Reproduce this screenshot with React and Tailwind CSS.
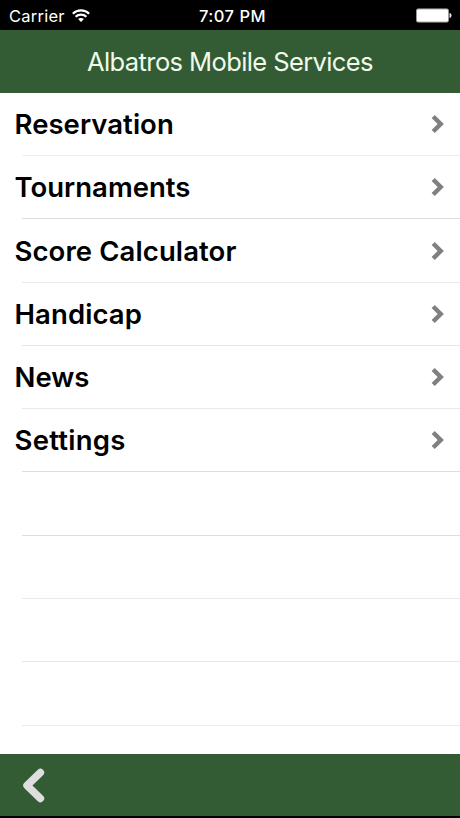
const rows = [
  { label: 'Reservation', h: 'h-[63px]', line: 'border-[#efeff0]', tracking: 'tracking-[0.05px]' },
  { label: 'Tournaments', h: 'h-[63px]', line: 'border-[#dedee0]', tracking: 'tracking-[0px]' },
  { label: 'Score Calculator', h: 'h-[64px]', line: 'border-[#e9e9ea]', tracking: 'tracking-[0.1px]' },
  { label: 'Handicap', h: 'h-[63px]', line: 'border-[#e6e6e7]', tracking: 'tracking-[0.1px]' },
  { label: 'News', h: 'h-[63px]', line: 'border-[#e9e9ea]', tracking: 'tracking-[0px]' },
  { label: 'Settings', h: 'h-[63px]', line: 'border-[#dedee0]', tracking: 'tracking-[0.25px]' },
  { h: 'h-[64px]', line: 'border-[#dedee0]' },
  { h: 'h-[63px]', line: 'border-[#e9e9ea]' },
  { h: 'h-[63px]', line: 'border-[#e6e6e7]' },
  { h: 'h-[64px]', line: 'border-[#ececed]' },
];

function Wifi() {
  return (
    <svg className="ml-[7px] h-[14px] w-[18px]" viewBox="0 0 18 14" fill="none" stroke="#fff" strokeWidth="2.1">
      <path d="M0.8 4.700C5.400 0.300 12.600 0.300 17.200 4.700" />
      <path d="M3.600 7.700C6.500 4.900 11.500 4.900 14.400 7.700" />
      <path d="M9 13L6.100 10.100C7.700 8.600 10.300 8.600 11.900 10.100Z" fill="#fff" stroke="none" />
    </svg>
  );
}

function Battery() {
  return (
    <svg className="h-[15px] w-[36px]" viewBox="0 0 36 15">
      <rect x="0.5" y="0.9" width="32" height="13.2" rx="1.6" fill="#fff" stroke="#999" />
      <path d="M33.500 5v5c1.400-.2 2-1.300 2-2.500s-.6-2.300-2-2.500z" fill="#e8e8e8" />
    </svg>
  );
}

export default function App() {
  return (
    <div className="flex h-[818px] w-[460px] flex-col overflow-hidden bg-white font-['Inter',sans-serif]">
      <header className="grid h-[30px] shrink-0 grid-cols-3 items-center bg-black text-white">
        <div className="flex items-center pl-[9px] pt-[2px]">
          <span className="text-[16.5px] leading-5 tracking-[0.25px]">Carrier</span>
          <Wifi />
        </div>
        <span className="pl-[5px] pt-[2px] text-center text-[16.5px] font-medium leading-5 tracking-[0.5px]">7:07 PM</span>
        <div className="flex justify-end pr-[8px] pt-[1px]">
          <Battery />
        </div>
      </header>
      <div className="flex h-[63px] shrink-0 items-center justify-center bg-[#335c35] pt-px text-[25.500px] tracking-[-0.600px] text-[#f0faeb]">
        <h1>Albatros Mobile Services</h1>
      </div>
      <ul className="flex-1">
        {rows.map((row, i) => (
          <li key={i} className={`${row.h} ml-[14px] flex flex-col`}>
            <div className="flex flex-1 items-center justify-between pr-[16px]">
              {row.label && (
                <>
                  <span className={`pl-[0.5px] text-[27.5px] font-semibold leading-8 text-black ${row.tracking}`}>{row.label}</span>
                  <svg className="h-[20px] w-[13px]" viewBox="0 0 13 20" fill="none" stroke="#808080" strokeWidth="4.5">
                    <path d="M2.200 2.500L9.700 10L2.200 17.500" />
                  </svg>
                </>
              )}
            </div>
            <div className={`ml-[8px] border-t ${row.line}`} />
          </li>
        ))}
      </ul>
      <footer className="flex h-[64px] shrink-0 items-center border-b-2 border-black bg-[#335c35] pl-[22px]">
        <svg className="h-[36px] w-[24px]" viewBox="0 0 24 36" fill="none" stroke="#dedede" strokeWidth="7.500" strokeLinecap="round" strokeLinejoin="round">
          <path d="M18.400 5.500L5 18.500L18.400 31.500" />
        </svg>
      </footer>
    </div>
  );
}
